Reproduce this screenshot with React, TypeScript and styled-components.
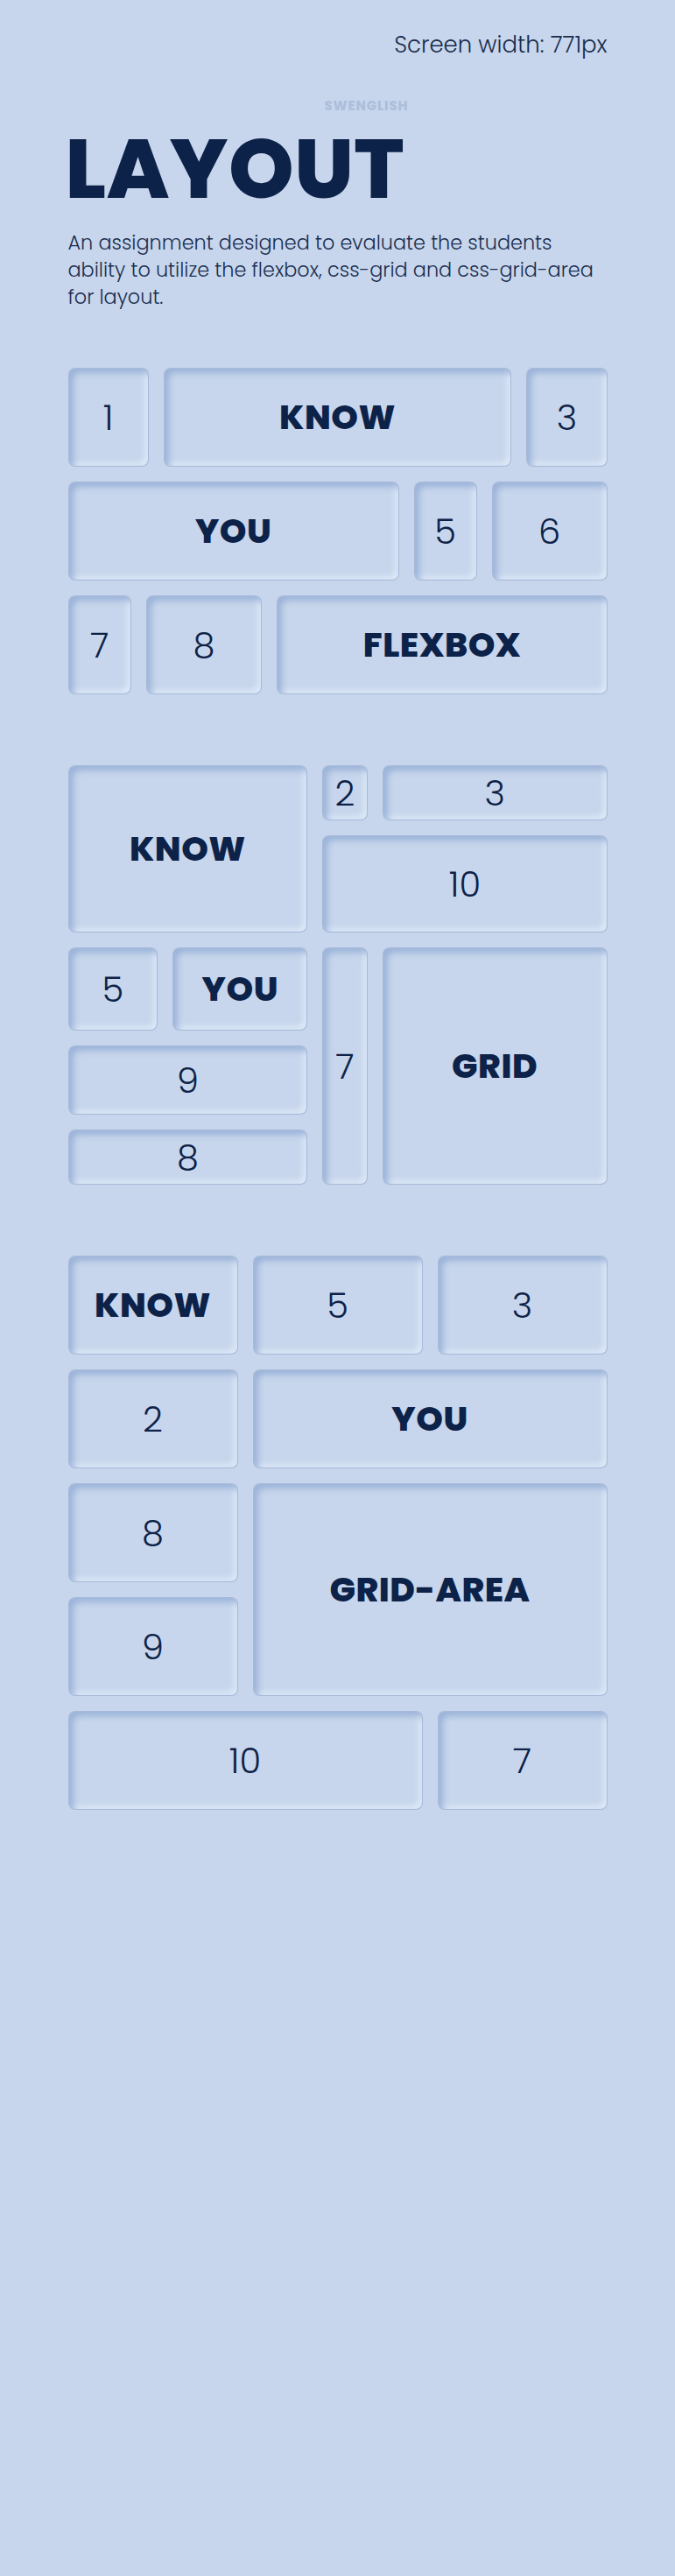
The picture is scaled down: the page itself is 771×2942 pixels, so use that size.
import styled, { createGlobalStyle } from "styled-components";

const GlobalStyle = createGlobalStyle`
body {
  margin: 0;
  background: #c7d6ec;
  color: #0d2248;
  font-family: "Poppins", "Open Sans", "Noto Sans", sans-serif;
}
`

const Page = styled.div`
width: 616px;
margin: 0 auto;
padding-bottom: 875px;
`

const ScreenWidth = styled.div`
text-align: right;
font-size: 26px;
font-weight: 300;
line-height: 1.5;
padding-top: 32px;
color: #1a2c4d;
`

const Watermark = styled.div`
margin: 38px 0 0 66px;
text-align: center;
font-size: 15px;
font-weight: 800;
letter-spacing: 0.8px;
color: #adbfdb;
filter: blur(0.6px);
`

const Title = styled.h1`
margin: 13px 0 0 -3px;
font-size: 95px;
font-weight: 800;
line-height: 1;
letter-spacing: 0.5px;
color: #0d2248;
`

const Intro = styled.p`
margin: 22px 0 0;
font-size: 22.4px;
font-weight: 300;
line-height: 31px;
color: #1b2e50;
`

const FlexSection = styled.section`
margin-top: 65px;
display: flex;
flex-direction: column;
gap: 17px;
`

const FlexRow = styled.div`
display: flex;
gap: 17px;
height: 113px;
`

const GridSection = styled.section`
margin-top: 81px;
display: grid;
grid-template-columns: 2fr 3fr 1fr 5fr;
grid-template-rows: 63px 111px 95px 79px 63px;
gap: 17px;
`

const AreaSection = styled.section`
margin-top: 81px;
display: grid;
grid-template-columns: repeat(3, 1fr);
grid-template-rows: repeat(5, 113px);
gap: 17px;
grid-template-areas:
  "know five three"
  "two you you"
  "eight area area"
  "nine area area"
  "ten ten seven";
`

const Box = styled.div<{ $grow?: number; $col?: string; $row?: string; $area?: string; $word?: boolean }>`
flex: ${p => p.$grow ?? 1} 1 0;
grid-column: ${p => p.$col ?? "auto"};
grid-row: ${p => p.$row ?? "auto"};
${p => p.$area ? `grid-area: ${p.$area};` : ""}
display: flex;
align-items: center;
justify-content: center;
box-sizing: border-box;
border-radius: 8px;
background: #c7d6ec;
border: 1px solid rgba(140, 163, 200, 0.55);
box-shadow:
  inset 5px 5px 7px rgba(145, 171, 213, 0.8),
  inset -4px -4px 6px rgba(226, 236, 250, 0.8);
font-size: ${p => p.$word ? "39px" : "40px"};
font-weight: ${p => p.$word ? 800 : 300};
letter-spacing: ${p => p.$word ? "0.5px" : "0"};
color: #0d2248;
`

export default function App() {
  return (<>
    <GlobalStyle />
    <Page>
      <ScreenWidth>Screen width: 771px</ScreenWidth>
      <Watermark>SWENGLISH</Watermark>
      <Title>LAYOUT</Title>
      <Intro>An assignment designed to evaluate the students ability to utilize the flexbox, css-grid and css-grid-area for layout.</Intro>

      <FlexSection>
        <FlexRow>
          <Box $grow={91}>1</Box>
          <Box $grow={400} $word>KNOW</Box>
          <Box $grow={91}>3</Box>
        </FlexRow>
        <FlexRow>
          <Box $grow={380} $word>YOU</Box>
          <Box $grow={71}>5</Box>
          <Box $grow={131}>6</Box>
        </FlexRow>
        <FlexRow>
          <Box $grow={71}>7</Box>
          <Box $grow={132}>8</Box>
          <Box $grow={379} $word>FLEXBOX</Box>
        </FlexRow>
      </FlexSection>

      <GridSection>
        <Box $col="1 / 3" $row="1 / 3" $word>KNOW</Box>
        <Box $col="3" $row="1">2</Box>
        <Box $col="4" $row="1">3</Box>
        <Box $col="3 / 5" $row="2">10</Box>
        <Box $col="1" $row="3">5</Box>
        <Box $col="2" $row="3" $word>YOU</Box>
        <Box $col="1 / 3" $row="4">9</Box>
        <Box $col="1 / 3" $row="5">8</Box>
        <Box $col="3" $row="3 / 6">7</Box>
        <Box $col="4" $row="3 / 6" $word>GRID</Box>
      </GridSection>

      <AreaSection>
        <Box $area="know" $word>KNOW</Box>
        <Box $area="five">5</Box>
        <Box $area="three">3</Box>
        <Box $area="two">2</Box>
        <Box $area="you" $word>YOU</Box>
        <Box $area="eight">8</Box>
        <Box $area="area" $word>GRID-AREA</Box>
        <Box $area="nine">9</Box>
        <Box $area="ten">10</Box>
        <Box $area="seven">7</Box>
      </AreaSection>
    </Page>
  </>)
}
